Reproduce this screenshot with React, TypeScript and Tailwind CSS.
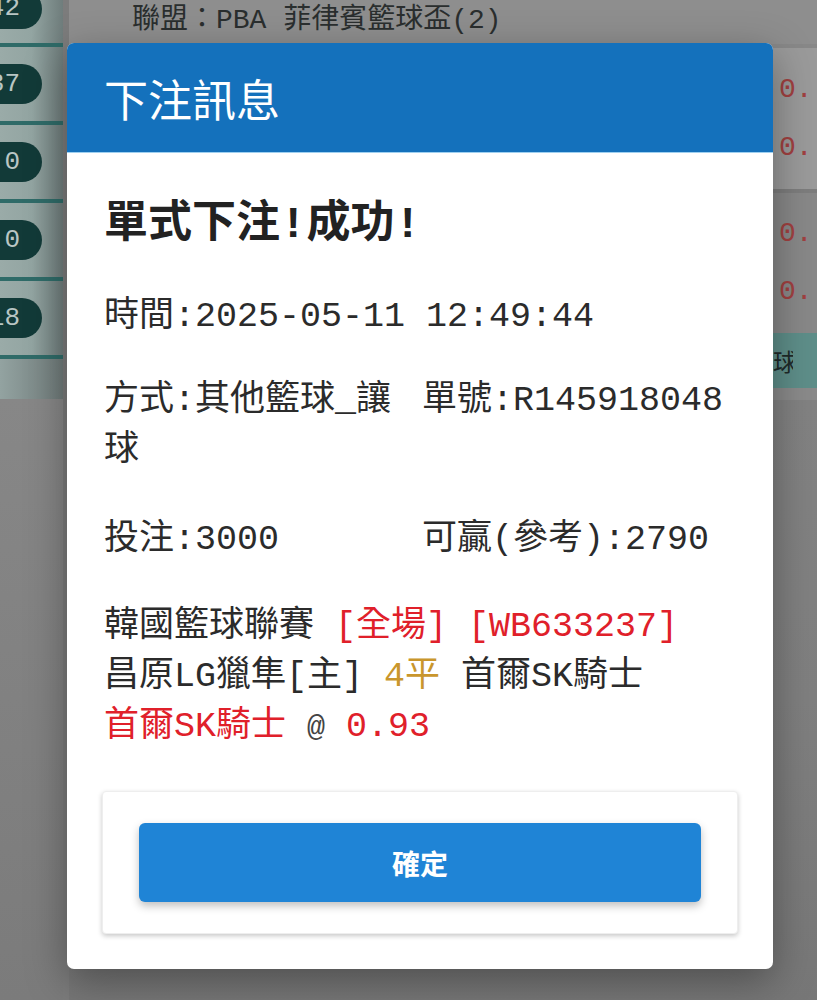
import React from 'react';

const mono = "font-['Liberation_Mono','Noto_Sans_CJK_TC',monospace]";
const sans = "font-['Noto_Sans_CJK_TC','Noto_Sans',sans-serif]";

const sideRows = [
  { num: '42', h: 'h-[47px]', pill: '-mt-[26px]' },
  { num: '37', h: 'h-[78px]', pill: '' },
  { num: '0', h: 'h-[78px]', pill: '' },
  { num: '0', h: 'h-[78px]', pill: '' },
  { num: '18', h: 'h-[78px]', pill: '' },
];

const SideColumn: React.FC = () => (
  <div className="w-[63px] shrink-0 flex flex-col">
    {sideRows.map((r, i) => (
      <div
        key={i}
        className={`${r.h} flex items-center border-b-[4px] border-[#2f6b68] bg-gradient-to-r from-[#9aaba8] via-[#93a5a2] to-[#6f7d7c]`}
      >
        <div className={`${r.pill} -ml-[30px] w-[72px] h-[40px] rounded-full bg-[#123a38] flex items-center justify-end pr-[22px] text-[26px] text-[#b9c6c4] ${mono}`}>
          {r.num}
        </div>
      </div>
    ))}
    <div className="h-[40px] bg-gradient-to-r from-[#93a3a1] to-[#707b7a]" />
    <div className="flex-1 bg-gradient-to-b from-[#878787] to-[#7b7b7b]" />
  </div>
);

const OddsRow: React.FC<{ bg: string; h: string }> = ({ bg, h }) => (
  <div className={`${h} ${bg} flex flex-col justify-center items-end pr-[2px] gap-[16px] text-[28px] text-[#a04040] ${mono}`}>
    <span className="w-[36px]">0.</span>
    <span className="w-[36px]">0.</span>
  </div>
);

const Background: React.FC = () => (
  <div className="flex h-[1000px] bg-[#808080]">
    <SideColumn />
    <div className="flex-1 flex flex-col border-l-[6px] border-[#7c7c7c]">
      <div className={`h-[48px] bg-[#8e8e8e] border-b-[4px] border-[#888888] flex items-center pl-[63px] pb-[2px] text-[28px] text-[#2a2e2e] ${mono}`}>
        聯盟：PBA 菲律賓籃球盃(2)
      </div>
      <OddsRow bg="bg-[#9a9a9a]" h="h-[141px]" />
      <div className="h-[4px] bg-[#7d7d7d]" />
      <OddsRow bg="bg-[#888888]" h="h-[140px]" />
      <div className={`h-[55px] bg-[#5e8e89] flex items-center justify-end pr-[24px] text-[24px] text-[#1f2a29] ${sans}`}>
        <span className="w-[20px] overflow-hidden">球</span>
      </div>
      <div className="h-[12px] bg-[#8a8a8a]" />
      <div className="flex-1 bg-gradient-to-b from-[#828282] via-[#7f7f7f] to-[#777777]" />
    </div>
  </div>
);

const Dialog: React.FC = () => (
  <div className="absolute left-[67px] top-[43px] w-[706px] rounded-[7px] overflow-hidden bg-white shadow-[0_12px_40px_rgba(0,0,0,0.35)]">
    <div className={`h-[110px] bg-[#1471bc] border-b border-[#9fd0f0] flex items-center pl-[37px] text-[44px] text-white ${sans}`}>
      下注訊息
    </div>
    <div className={`px-[37px] pt-[42px] pb-[35px] text-[#2b2b2b] ${mono}`}>
      <div className="text-[44px] leading-[60px] font-bold text-[#222]">單式下注!成功!</div>

      <div className="mt-[37px] text-[35px] leading-[50px]">時間:2025-05-11 12:49:44</div>

      <div className="mt-[34px] grid grid-cols-2 gap-y-[39px] text-[35px] leading-[50px]">
        <div>方式:其他籃球_讓球</div>
        <div className="pl-[2px]">單號:R145918048</div>
        <div>投注:3000</div>
        <div className="pl-[2px]">可贏(參考):2790</div>
      </div>

      <div className="mt-[37px] text-[35px] leading-[50px]">
        <div>
          韓國籃球聯賽 <span className="text-[#e0202a]">[全場]</span>{' '}
          <span className="text-[#e0202a]">[WB633237]</span>
        </div>
        <div>
          昌原LG獵隼[主] <span className="text-[#c9962c]">4平</span> 首爾SK騎士
        </div>
        <div>
          <span className="text-[#e0202a]">首爾SK騎士</span> <span className="text-[30px] text-[#444]">@</span>{' '}
          <span className="text-[#e0202a]">0.93</span>
        </div>
      </div>

      <div className="mt-[38px] -mx-[2px] rounded-[4px] bg-white border border-[#eeeeee] shadow-[0_2px_5px_rgba(0,0,0,0.22)] px-[36px] py-[31px]">
        <button className={`w-full h-[79px] rounded-[6px] bg-[#1f84d6] text-white text-[28px] font-bold shadow-[0_4px_8px_rgba(0,0,0,0.25)] ${sans}`}>
          確定
        </button>
      </div>
    </div>
  </div>
);

export default function App() {
  return (
    <div className="relative w-[817px] h-[1000px] overflow-hidden">
      <Background />
      <Dialog />
    </div>
  );
}
